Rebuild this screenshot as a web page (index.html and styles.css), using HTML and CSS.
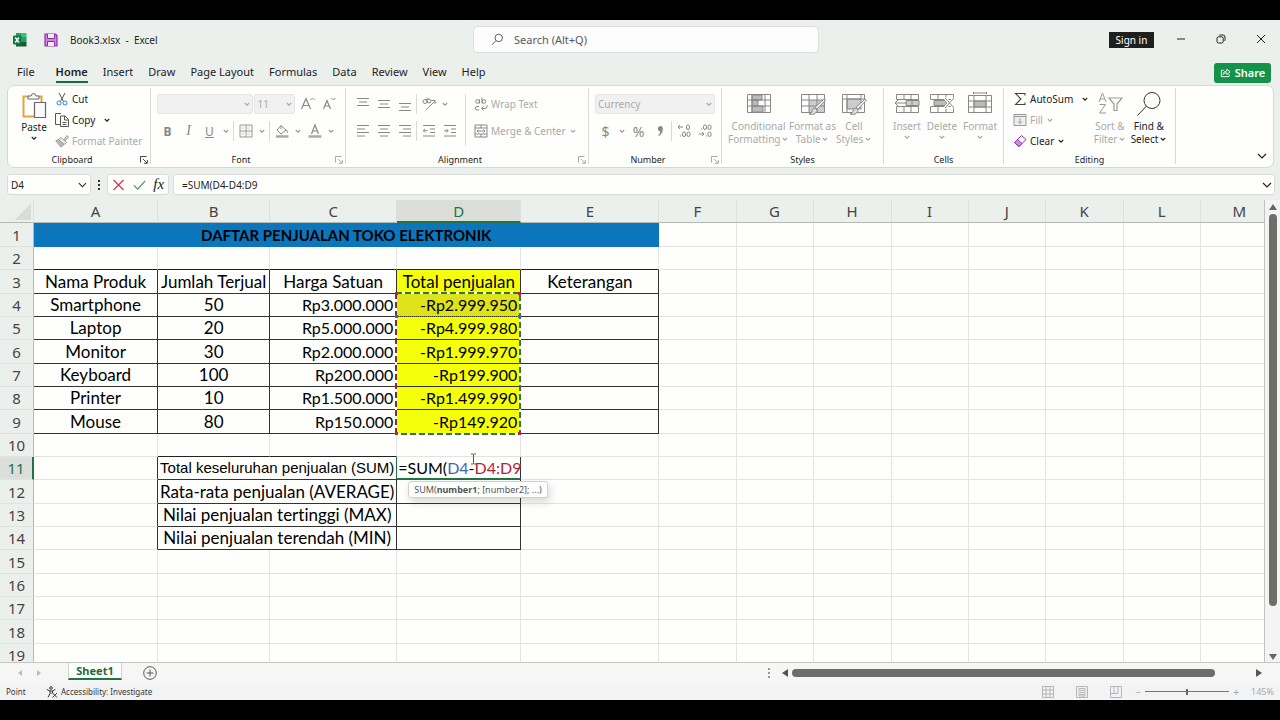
FILE: index.html
```html
<!doctype html>
<html lang="en">
<head>
    <meta charset="UTF-8">
    <meta name="viewport" content="width=device-width, initial-scale=1.0">
    <title>Book3.xlsx - Excel</title>
    <link rel="stylesheet" href="styles.css">
</head>
<body>
<svg class="defs" aria-hidden="true">
    <symbol id="caret" viewBox="0 0 8 8"><path d="M1.8 3 4 5.2 6.2 3" fill="none" stroke="currentColor" stroke-width="1.1"/></symbol>
    <symbol id="launcher" viewBox="0 0 8 8"><path d="M.5 6.500V.5h6M3 3l4 4M7.300 4v3.300H4" fill="none" stroke="currentColor"/></symbol>
    <symbol id="down" viewBox="0 0 10 10"><path d="M1 3l4 4 4-4" fill="none" stroke="currentColor" stroke-width="1.200"/></symbol>
</svg>
<div class="app">
    <header class="titlebar">
        <div class="doc">
            <svg class="logo" viewBox="0 0 16 16"><path fill="#21a366" d="M4 1h6v4H4z"/><path fill="#33c481" d="M9 1h5.500v4H9z"/><path fill="#107c41" d="M4 5h6v5H4z"/><path fill="#21a366" d="M9 5h5.500v5H9z"/><path fill="#185c37" d="M4 10h10.500v4.500H4z"/><rect x="1" y="3.500" width="8.500" height="9" rx="1" fill="#107c41"/><path d="M3.300 5.500 7 10.500M7 5.500 3.300 10.500" stroke="#fff" stroke-width="1.400"/></svg>
            <button class="save" aria-label="Save"><svg viewBox="0 0 14 14"><path d="M1 1h10.500L13 2.500V13H1z" fill="#c987dc" stroke="#8b2fa8" stroke-width="1.200"/><path d="M3.500 1v4.500h7V1" fill="#f5eaf8" stroke="#8b2fa8"/><path d="M3.500 13V8.500h7V13" fill="#f5eaf8" stroke="#8b2fa8"/></svg></button>
            <span class="doc-name">Book3.xlsx&nbsp; -&nbsp; Excel</span>
        </div>
        <label class="search">
            <svg viewBox="0 0 14 14"><circle cx="8.300" cy="5.300" r="4" fill="none" stroke="#555"/><path d="M5.300 8.300 1 12.800" stroke="#555"/></svg>
            <input type="text" placeholder="Search (Alt+Q)">
        </label>
        <div class="window">
            <button class="signin">Sign in</button>
            <button class="win" aria-label="Minimize"><svg viewBox="0 0 10 10"><path d="M1 5h8" stroke="#222"/></svg></button>
            <button class="win" aria-label="Restore"><svg viewBox="0 0 10 10" fill="none" stroke="#222"><rect x="1" y="2.800" width="6.200" height="6.200" rx="1.500"/><path d="M3 1.500Q3.500 1 4.500 1H7a2 2 0 0 1 2 2v2.500q0 1-.6 1.500"/></svg></button>
            <button class="win" aria-label="Close"><svg viewBox="0 0 10 10"><path d="M1 1l8 8M9 1 1 9" stroke="#222"/></svg></button>
        </div>
    </header>

    <nav class="tabs">
        <a href="#" class="tab">File</a>
        <a href="#" class="tab active">Home</a>
        <a href="#" class="tab">Insert</a>
        <a href="#" class="tab">Draw</a>
        <a href="#" class="tab">Page Layout</a>
        <a href="#" class="tab">Formulas</a>
        <a href="#" class="tab">Data</a>
        <a href="#" class="tab">Review</a>
        <a href="#" class="tab">View</a>
        <a href="#" class="tab">Help</a>
        <button class="share"><svg viewBox="0 0 12 12" fill="none" stroke="#fff"><path d="M4 3.500H1.500v7h8.500V8"/><path d="M3.500 8q.3-3.500 4-3.700V2.300l3.500 3-3.500 3V6.300Q5 6.300 3.500 8z"/></svg>Share</button>
    </nav>

    <section class="ribbon">
        <div class="group clipboard">
            <div class="tools">
                <button class="big paste">
                    <svg viewBox="0 0 26 28"><path d="M8 4.500H2.500v20H13M17 4.500h3.500V10" fill="none" stroke="#e8a33d" stroke-width="2"/><path d="M7 7V4h3q.5-2.500 2.500-2.500T15 4h3v3z" fill="#fff" stroke="#666"/><path d="M13.500 10.500h11v15h-11z" fill="#fafafa" stroke="#666" stroke-width="1.200"/></svg>
                    <span>Paste</span>
                    <svg class="caret"><use href="#caret"/></svg>
                </button>
                <div class="stack">
                    <button class="item"><svg class="ico" viewBox="0 0 14 14" fill="none"><path d="M4 1l4.500 8.500M10 1 5.500 9.500" stroke="#555"/><circle cx="4" cy="11" r="2" stroke="#2b88d8"/><circle cx="10" cy="11" r="2" stroke="#2b88d8"/></svg>Cut</button>
                    <button class="item"><svg class="ico" viewBox="0 0 14 14" fill="none" stroke="#555"><path d="M5 11.500H.5v-11H6"/><path d="M5.500 3h4.500l3.500 3.500v7h-8zM9.500 3v4h4M7.500 9.500h4M7.500 11.500h4"/></svg>Copy<svg class="caret far"><use href="#caret"/></svg></button>
                    <button class="item off"><svg class="ico" viewBox="0 0 14 14"><path d="M9 5.500 12 1.500l1.500 1.500L10.500 6.500z" fill="#ddd" stroke="#999"/><path d="M6 3.500l5.500 5L9 10.500 3.500 5.500z" fill="#eee" stroke="#999"/><path d="M3.500 5.500.8 6.800 6 13l3-2.500z" fill="#bbb" stroke="#999"/></svg>Format Painter</button>
                </div>
            </div>
            <div class="caption has-launcher">Clipboard<svg class="launcher dark"><use href="#launcher"/></svg></div>
        </div>

        <div class="group font">
            <div class="tools rows">
                <div class="row">
                    <button class="combo face" aria-label="Font"><span></span><svg class="caret"><use href="#caret"/></svg></button>
                    <button class="combo size" aria-label="Font size"><span>11</span><svg class="caret"><use href="#caret"/></svg></button>
                    <button class="tool grow" aria-label="Increase font size"><svg viewBox="0 0 16 16" fill="none" stroke="#888"><path d="M1.500 13 6 2.500 10.500 13M3 9.500h6" stroke-width="1.200"/><path d="M10.500 4l2-2 2 2"/></svg></button>
                    <button class="tool" aria-label="Decrease font size"><svg viewBox="0 0 16 16" fill="none" stroke="#888"><path d="M2.500 13 6 4.500 9.500 13M4 10h4.500" stroke-width="1.200"/><path d="M10.500 2l2 2 2-2"/></svg></button>
                </div>
                <div class="row">
                    <button class="tool bold">B</button>
                    <button class="tool italic">I</button>
                    <button class="tool under">U</button>
                    <svg class="caret drop"><use href="#caret"/></svg>
                    <i class="sep"></i>
                    <button class="tool" aria-label="Borders"><svg viewBox="0 0 16 16" fill="none" stroke="#999"><path d="M2 2h12v12H2zM8 2v12M2 8h12"/><path d="M5 3v10M11 3v10M3 5h10M3 11h10" stroke="#ccc" stroke-dasharray="1 1"/></svg></button>
                    <svg class="caret drop"><use href="#caret"/></svg>
                    <i class="sep"></i>
                    <button class="tool" aria-label="Fill color"><svg viewBox="0 0 16 16" fill="none" stroke="#888"><path d="M7 2.500l5 4.500-5 4L3 7zM7 2.500V6M12 6.500q2 2 1.200 3.500"/><path d="M2 13.500h12.500" stroke="#aaa" stroke-width="2.500"/></svg></button>
                    <svg class="caret drop"><use href="#caret"/></svg>
                    <button class="tool" aria-label="Font color"><svg viewBox="0 0 16 16" fill="none" stroke="#888"><path d="M4.500 11 8 2l3.500 9M5.500 8h5" stroke-width="1.200"/><path d="M1.500 13.500h13" stroke="#aaa" stroke-width="2.500"/></svg></button>
                    <svg class="caret drop"><use href="#caret"/></svg>
                </div>
            </div>
            <div class="caption has-launcher">Font<svg class="launcher"><use href="#launcher"/></svg></div>
        </div>

        <div class="group alignment">
            <div class="tools">
                <div class="rows aligns">
                    <div class="row">
                        <button class="tool" aria-label="Top align"><svg viewBox="0 0 16 16" stroke="#888"><path d="M2 2.500h12M4 6h8M2 9.500h12"/></svg></button>
                        <button class="tool" aria-label="Middle align"><svg viewBox="0 0 16 16" stroke="#888"><path d="M2 4.500h12M4 8h8M2 11.500h12"/></svg></button>
                        <button class="tool" aria-label="Bottom align"><svg viewBox="0 0 16 16" stroke="#888"><path d="M2 7.500h12M4 11h8M2 14.500h12"/></svg></button>
                        <i class="sep"></i>
                        <button class="tool" aria-label="Orientation"><svg viewBox="0 0 16 16" fill="none" stroke="#888"><circle cx="4" cy="5.500" r="2"/><path d="M5 3l2 3.500"/><circle cx="8" cy="5" r="2"/><path d="M6 1.500l1.500 2M5 14 14 5M10.500 4.500H14V8"/></svg></button>
                        <svg class="caret drop"><use href="#caret"/></svg>
                    </div>
                    <div class="row">
                        <button class="tool" aria-label="Align left"><svg viewBox="0 0 16 16" stroke="#888"><path d="M2 2.500h12M2 6h8M2 9.500h12M2 13h8"/></svg></button>
                        <button class="tool" aria-label="Center"><svg viewBox="0 0 16 16" stroke="#888"><path d="M2 2.500h12M4 6h8M2 9.500h12M4 13h8"/></svg></button>
                        <button class="tool" aria-label="Align right"><svg viewBox="0 0 16 16" stroke="#888"><path d="M2 2.500h12M6 6h8M2 9.500h12M6 13h8"/></svg></button>
                        <i class="sep"></i>
                        <button class="tool" aria-label="Decrease indent"><svg viewBox="0 0 16 16" fill="none" stroke="#888"><path d="M2 2.500h12M9 6h5M9 9.500h5M2 13h12M2.500 7.800h4M4 6 2.300 7.800 4 9.500"/></svg></button>
                        <button class="tool" aria-label="Increase indent"><svg viewBox="0 0 16 16" fill="none" stroke="#888"><path d="M2 2.500h12M9 6h5M9 9.500h5M2 13h12M2 7.800h4M4.500 6 6.200 7.800 4.500 9.500"/></svg></button>
                    </div>
                </div>
                <i class="sep tall"></i>
                <div class="rows">
                    <button class="item off row"><svg class="ico" viewBox="0 0 14 14" fill="none" stroke="#888"><circle cx="3.500" cy="4.500" r="1.800"/><path d="M5.500 2.500v4M8 .5v6"/><circle cx="10" cy="4.500" r="1.800"/><path d="M5 9.500H3a1.600 1.600 0 0 0 0 3.500h2M13 8v1.500q0 2-2 2H8M9.500 9.500l-2 2 2 2"/></svg>Wrap Text</button>
                    <button class="item off row"><svg class="ico" viewBox="0 0 14 14" fill="none" stroke="#888"><path d="M1 1h12v12H1zM1 4h12M1 10h12M7 1v3M7 10v3"/><path d="M3 7h8M4.500 5.500 3 7l1.500 1.500M9.500 5.500 11 7 9.500 8.500"/></svg>Merge &amp; Center<svg class="caret"><use href="#caret"/></svg></button>
                </div>
            </div>
            <div class="caption has-launcher">Alignment<svg class="launcher"><use href="#launcher"/></svg></div>
        </div>

        <div class="group number">
            <div class="tools rows">
                <div class="row">
                    <button class="combo format" aria-label="Number format"><span>Currency</span><svg class="caret"><use href="#caret"/></svg></button>
                </div>
                <div class="row">
                    <button class="tool sign">$</button>
                    <svg class="caret drop"><use href="#caret"/></svg>
                    <button class="tool sign">%</button>
                    <button class="tool" aria-label="Comma style"><svg viewBox="0 0 16 16"><path d="M8 3a2.800 2.800 0 0 1 2.800 3q0 4.500-4 7l-.6-.8Q8.200 10.500 8.300 8.500A2.800 2.800 0 0 1 8 3z" fill="#888"/></svg></button>
                    <i class="sep"></i>
                    <button class="tool" aria-label="Increase decimal"><svg viewBox="0 0 16 16" fill="none" stroke="#888"><path d="M2 4h5M4 2 2 4l2 2M4 13h1"/><rect x="10.500" y="2" width="3" height="4.500" rx="1.500"/><rect x="6.500" y="9" width="3" height="4.500" rx="1.500"/><rect x="11" y="9" width="3" height="4.500" rx="1.500"/></svg></button>
                    <button class="tool" aria-label="Decrease decimal"><svg viewBox="0 0 16 16" fill="none" stroke="#888"><path d="M2 11h5M5 9l2 2-2 2M4 6h1M9 13h1"/><rect x="6.500" y="2" width="3" height="4.500" rx="1.500"/><rect x="11" y="2" width="3" height="4.500" rx="1.500"/><rect x="11" y="9" width="3" height="4.500" rx="1.500"/></svg></button>
                </div>
            </div>
            <div class="caption has-launcher">Number<svg class="launcher"><use href="#launcher"/></svg></div>
        </div>

        <div class="group styles">
            <div class="tools">
                <button class="big off"><svg viewBox="0 0 26 24" fill="none" stroke="#888"><path d="M1.500 2.500h23v18h-23z"/><path d="M6 3h10v5H6zM6 8h6v6H6zM6 14h11v6H6z" fill="#bbb"/><path d="M2 8h22M2 14h22M6 3v17M19 3v17"/></svg><span>Conditional<br>Formatting <svg class="caret"><use href="#caret"/></svg></span></button>
                <button class="big off"><svg viewBox="0 0 26 24" fill="none" stroke="#888"><path d="M9 8h15v12H9z" fill="#ccc" stroke="none"/><path d="M1.500 2.500h23v18h-23zM2 8h22M2 14h22M9 3v17M17 3v17"/><path d="M25.500 8 17 17l-2-1.500L23.500 7.500z" fill="#fff"/><path d="M15 16q-2.500 0-3 3-.5 2.500-3 3 5.500 1.500 8-2.500.5-2-2-3.500z" fill="#ddd"/></svg><span>Format as<br>Table <svg class="caret"><use href="#caret"/></svg></span></button>
                <button class="big off"><svg viewBox="0 0 26 24" fill="none" stroke="#888"><path d="M6 7h14v10H6z" fill="#ccc"/><path d="M1.500 2.500h22v18h-22zM2 7h22M6 3v17M20 3v4"/><path d="M25.500 8 17 17l-2-1.500L23.500 7.500z" fill="#fff"/><path d="M15 16q-2.500 0-3 3-.5 2.500-3 3 5.500 1.500 8-2.500.5-2-2-3.500z" fill="#ddd"/></svg><span>Cell<br>Styles <svg class="caret"><use href="#caret"/></svg></span></button>
            </div>
            <div class="caption">Styles</div>
        </div>

        <div class="group cells">
            <div class="tools">
                <button class="big off"><svg viewBox="0 0 26 24" fill="none" stroke="#888"><path d="M2.500 2.500h22v5h-22zM2.500 14.500h22v6h-22zM10 3v4M17 3v4M10 15v5M17 15v5"/><path d="M12 8.500h13v5H12z" fill="#ccc"/><path d="M18 9v4M1 11h12M5 7 1 11l4 4"/></svg><span>Insert</span><svg class="caret"><use href="#caret"/></svg></button>
                <button class="big off"><svg viewBox="0 0 26 24" fill="none" stroke="#888"><path d="M1.500 2.500h23v5h-23zM1.500 14.500h23v6h-23zM9 3v4M17 3v4M9 15v5M17 15v5"/><path d="M5 8.500h11l2 2.500-2 2.500H5z" fill="#bbb"/><path d="M16 6l9 10M25 6l-9 10" stroke="#fff" stroke-width="3"/><path d="M16 6l9 10M25 6l-9 10"/></svg><span>Delete</span><svg class="caret"><use href="#caret"/></svg></button>
                <button class="big off"><svg viewBox="0 0 26 24" fill="none" stroke="#888"><path d="M6.500 0v2M19.500 0v2M6.500 1h13"/><path d="M7 9h12v6H7z" fill="#bbb"/><path d="M1.500 3.500h23v17h-23zM2 9h22M2 15h22M7 4v16M19 4v16"/></svg><span>Format</span><svg class="caret"><use href="#caret"/></svg></button>
            </div>
            <div class="caption">Cells</div>
        </div>

        <div class="group editing">
            <div class="tools">
                <div class="stack">
                    <button class="item"><svg class="ico" viewBox="0 0 14 14"><path d="M12 3.500V1.500H2.500L8 7l-5.500 5.500H12v-2" fill="none" stroke="#444" stroke-width="1.100"/></svg>AutoSum<svg class="caret far"><use href="#caret"/></svg></button>
                    <button class="item off"><svg class="ico" viewBox="0 0 14 14" fill="none" stroke="#999"><path d="M1 1.500h12v11H1z" fill="#eee"/><path d="M1 3.500h12M7 5.500v5M5 8.500l2 2 2-2"/></svg>Fill <svg class="caret"><use href="#caret"/></svg></button>
                    <button class="item"><svg class="ico" viewBox="0 0 14 14"><path d="M8.500 1.500 13 5.500 6 12.500 1.500 8.500z" fill="#fff" stroke="#8b2fa8"/><path d="M4.500 5.500 9 9.500l-3 3-4.500-4z" fill="#d28be0" stroke="#8b2fa8"/></svg>Clear<svg class="caret"><use href="#caret"/></svg></button>
                </div>
                <button class="big off"><svg viewBox="0 0 26 24" fill="none" stroke="#999"><path d="M2 10 5.500 1 9 10M3.200 7h4.600M2.500 12.500h6l-6 8.500h6.500"/><path d="M12 6h13l-5 6v6.500h-3V12z" stroke-width="1.200"/></svg><span>Sort &amp;<br>Filter <svg class="caret"><use href="#caret"/></svg></span></button>
                <button class="big"><svg viewBox="0 0 26 24" fill="none" stroke="#333"><circle cx="16" cy="8.500" r="8"/><path d="M10.500 14 1.500 23.500"/></svg><span>Find &amp;<br>Select <svg class="caret"><use href="#caret"/></svg></span></button>
            </div>
            <div class="caption">Editing</div>
        </div>
        <button class="collapse" aria-label="Collapse ribbon"><svg viewBox="0 0 10 10"><use href="#down"/></svg></button>
    </section>

    <section class="formula-row">
        <div class="box name-box">
            <input type="text" value="D4" aria-label="Name box">
            <svg viewBox="0 0 10 10"><use href="#down"/></svg>
        </div>
        <svg class="dots" viewBox="0 0 4 12" fill="#333"><path d="M1 1h2v2H1zM1 5h2v2H1zM1 9h2v2H1z"/></svg>
        <div class="box fx">
            <button aria-label="Cancel"><svg viewBox="0 0 12 12"><path d="M1 1l10 10M11 1 1 11" stroke="#d13455" stroke-width="1.200"/></svg></button>
            <button aria-label="Enter"><svg viewBox="0 0 14 12"><path d="M1 6.500 5 10.500 13 1.500" fill="none" stroke="#3c9a5f" stroke-width="1.200"/></svg></button>
            <button class="fx-btn">fx</button>
        </div>
        <div class="box formula">
            <input type="text" value="=SUM(D4-D4:D9" aria-label="Formula bar">
            <svg viewBox="0 0 10 10"><use href="#down"/></svg>
        </div>
    </section>

    <main class="sheet">
        <div class="grid">
            <table>
                <colgroup>
                    <col class="c-head"><col class="c-a"><col class="c-b"><col class="c-c"><col class="c-d"><col class="c-e">
                    <col class="c-f"><col class="c-f"><col class="c-g"><col class="c-f"><col class="c-f"><col class="c-g"><col class="c-f"><col class="c-g">
                </colgroup>
                <thead>
                    <tr><th class="corner"></th><th>A</th><th>B</th><th>C</th><th class="sel">D</th><th>E</th><th>F</th><th>G</th><th>H</th><th>I</th><th>J</th><th>K</th><th>L</th><th>M</th></tr>
                </thead>
                <tbody id="rows">
                    <tr><th>1</th><td colspan="5" class="title">DAFTAR PENJUALAN TOKO ELEKTRONIK</td></tr>
                    <tr><th>2</th><td class="edge"></td><td class="edge"></td><td class="edge"></td><td class="edge"></td><td class="edge"></td></tr>
                    <tr class="data"><th>3</th><td>Nama Produk</td><td>Jumlah Terjual</td><td>Harga Satuan</td><td class="hot">Total penjualan</td><td>Keterangan</td></tr>
                    <tr class="data"><th>4</th><td>Smartphone</td><td>50</td><td class="num">Rp3.000.000</td><td class="num hot picked">-Rp2.999.950
                        <svg class="ants" viewBox="0 0 126 143" fill="none">
                            <path d="M1 1h124v141H1z" stroke="#fff" stroke-width="2"/>
                            <path d="M1 1v141" stroke="#7d2e3c" stroke-width="2" stroke-dasharray="6 3"/>
                            <path d="M1 1h124v141H1" stroke="#2c7a2c" stroke-width="2" stroke-dasharray="6 3"/>
                            <path d="M2 24.500h122" stroke="#4a82c4" stroke-dasharray="1 1"/>
                            <path d="M0 0h3v3H0zM123 0h3v3h-3zM0 140h3v3H0zM123 140h3v3h-3z" fill="#b0244f"/>
                            <path d="M0 23h3v3H0zM123 23h3v3h-3z" fill="#2f6fba"/>
                        </svg></td><td></td></tr>
                    <tr class="data"><th>5</th><td>Laptop</td><td>20</td><td class="num">Rp5.000.000</td><td class="num hot">-Rp4.999.980</td><td></td></tr>
                    <tr class="data"><th>6</th><td>Monitor</td><td>30</td><td class="num">Rp2.000.000</td><td class="num hot">-Rp1.999.970</td><td></td></tr>
                    <tr class="data"><th>7</th><td>Keyboard</td><td>100</td><td class="num">Rp200.000</td><td class="num hot">-Rp199.900</td><td></td></tr>
                    <tr class="data"><th>8</th><td>Printer</td><td>10</td><td class="num">Rp1.500.000</td><td class="num hot">-Rp1.499.990</td><td></td></tr>
                    <tr class="data"><th>9</th><td>Mouse</td><td>80</td><td class="num">Rp150.000</td><td class="num hot">-Rp149.920</td><td></td></tr>
                    <tr><th>10</th><td></td><td class="edge"></td><td class="edge"></td><td></td></tr>
                    <tr class="sum"><th class="sel">11</th><td class="pre"></td><td colspan="2" class="total">Total keseluruhan penjualan (SUM)</td><td class="edit">=SUM(<span class="ref1">D4</span>-<span class="ref2">D4:D9</span>
                        <span class="tip">SUM(<b>number1</b>; [number2]; ...)</span>
                        <svg class="cursor" viewBox="0 0 7 12"><path d="M1 1h2l.5.500.5-.5h2M3.500 1.500v9M1 11h2l.5-.5.5.500h2" fill="none" stroke="#555"/></svg></td></tr>
                    <tr class="sum"><th>12</th><td class="pre"></td><td colspan="2">Rata-rata penjualan (AVERAGE)</td><td></td></tr>
                    <tr class="sum"><th>13</th><td class="pre"></td><td colspan="2">Nilai penjualan tertinggi (MAX)</td><td></td></tr>
                    <tr class="sum"><th>14</th><td class="pre"></td><td colspan="2">Nilai penjualan terendah (MIN)</td><td></td></tr>
                    <tr><th>15</th></tr>
                    <tr><th>16</th></tr>
                    <tr><th>17</th></tr>
                    <tr><th>18</th></tr>
                    <tr><th>19</th></tr>
                </tbody>
            </table>
        </div>
        <div class="vscroll">
            <svg viewBox="0 0 8 6"><path d="M4 0l4 6H0z"/></svg>
            <div class="track"><div class="thumb"></div></div>
            <svg viewBox="0 0 8 6"><path d="M4 6 0 0h8z"/></svg>
        </div>
    </main>

    <div class="sheet-tabs">
        <div class="arrows">
            <svg viewBox="0 0 6 8"><path d="M5 1v6L1 4z"/></svg>
            <svg viewBox="0 0 6 8"><path d="M1 1v6l4-3z"/></svg>
        </div>
        <button class="sheet-tab">Sheet1</button>
        <button class="add" aria-label="New sheet"><svg viewBox="0 0 14 14" fill="none" stroke="#555"><circle cx="7" cy="7" r="6.300"/><path d="M7 3.500v7M3.500 7h7"/></svg></button>
        <div class="hscroll">
            <svg class="grip" viewBox="0 0 2 10"><path d="M0 0h2v2H0zM0 4h2v2H0zM0 8h2v2H0z"/></svg>
            <svg viewBox="0 0 6 8"><path d="M6 0v8L0 4z"/></svg>
            <div class="track"><div class="thumb"></div></div>
            <svg viewBox="0 0 6 8"><path d="M0 0v8l6-4z"/></svg>
        </div>
    </div>

    <footer class="status">
        <span class="mode">Point</span>
        <svg class="access" viewBox="0 0 12 12" fill="none" stroke="#333"><circle cx="5" cy="2" r="1.300"/><path d="M.8 3.500 4 5v2.500L2 11.300M9.300 3.500 6.500 5v2M4 5h2.500M4.500 8l1-1"/><path d="M6.500 7l4.500 4.500M11 7l-4.500 4.500"/></svg>
        <span>Accessibility: Investigate</span>
        <div class="views">
            <button aria-label="Normal"><svg viewBox="0 0 12 12"><path d="M.5.500h11v11H.5zM4 .5v11M8 .5v11M.5 4h11M.5 8h11"/></svg></button>
            <button aria-label="Page layout"><svg viewBox="0 0 12 12"><path d="M.5.500h11v11H.5zM3 2.500h6v7.500H3zM4 4.500h4M4 6.500h4M4 8.500h4"/></svg></button>
            <button aria-label="Page break preview"><svg viewBox="0 0 12 12"><path d="M.5.500h11v11H.5zM4 .5v7M8 .5v7M.5 7.500H8"/></svg></button>
        </div>
        <div class="zoom">
            <span>−</span>
            <input type="range" min="0" max="100" value="50" aria-label="Zoom">
            <span>+</span>
        </div>
        <span class="percent">145%</span>
    </footer>
</div>
<script>
    // fill every row with blank cells up to column M
    var rows = document.querySelectorAll('#rows tr');
    rows.forEach(function(row) {
        var used = 0;
        row.querySelectorAll('td').forEach(function(td) {
            used += td.colSpan;
        });
        while (used < 13) {
            row.appendChild(document.createElement('td')).className = 'blank';
            used++;
        }
    });
</script>
</body>
</html>
```
FILE: styles.css
```css
* {
    box-sizing: border-box;
}
body {
    margin: 0;
    padding: 20px 0;
    height: 100vh;
    background: #000;
    color: #222;
    font-family: "Noto Sans", sans-serif;
    font-size: 10px;
}
button, input {
    font: inherit;
    color: inherit;
    background: none;
    border: 0;
    padding: 0;
    outline: 0;
}
.defs {
    display: none;
}
.app {
    height: 100%;
    display: flex;
    flex-direction: column;
    background: #ecf0ed;
    overflow: hidden;
}

/* title bar */
.titlebar {
    display: flex;
    align-items: center;
    height: 40px;
    padding-left: 12px;
}
.doc, .window {
    flex: 1;
    display: flex;
    align-items: center;
}
.logo {
    width: 16px;
    height: 16px;
}
.save {
    margin: 0 12px 0 16px;
    height: 14px;
}
.save svg {
    width: 14px;
    height: 14px;
    display: block;
}
.search {
    display: flex;
    align-items: center;
    gap: 10px;
    width: 346px;
    height: 27px;
    margin-bottom: 2px;
    padding: 0 17px;
    background: #fbfcfb;
    border: 1px solid #dcdfdc;
    border-radius: 4px;
    font-size: 11px;
}
.search svg {
    width: 13px;
    height: 13px;
}
.search input {
    flex: 1;
}
.search input::placeholder {
    color: #5a5a5a;
}
.window {
    justify-content: flex-end;
}
.signin {
    width: 45px;
    height: 16px;
    margin-right: 2px;
    background: #1f1f1f;
    color: #fff;
}
.win {
    width: 30px;
    height: 20px;
    margin-left: 10px;
}
.win:last-child {
    margin-right: 4px;
}
.win svg {
    width: 10px;
    height: 10px;
}

/* ribbon tabs */
.tabs {
    display: flex;
    align-items: center;
    gap: 15px;
    height: 25px;
    padding: 0 9px 0 17px;
    font-size: 11px;
}
.tab {
    color: #222;
    text-decoration: none;
    line-height: 18px;
    border-bottom: 2px solid transparent;
}
.tab.active {
    margin-left: 6px;
    font-weight: 600;
    border-color: #0f7040;
}
.share {
    display: flex;
    align-items: center;
    justify-content: center;
    gap: 4px;
    width: 57px;
    height: 20px;
    margin-left: auto;
    border-radius: 3px;
    background: #15924a;
    color: #fff;
    font-weight: 600;
}
.share svg {
    width: 11px;
    height: 11px;
}

/* ribbon */
.ribbon {
    display: flex;
    height: 83px;
    margin: 0 6px 0 7px;
    background: #fefffc;
    border: 1px solid #d6d9d6;
    border-radius: 7px;
}
.group {
    display: flex;
    flex-direction: column;
    margin: 2px 0 3px;
    border-right: 1px solid #d9d9d9;
}
.clipboard { width: 143px; }
.font { width: 195px; }
.alignment { width: 243px; }
.number { width: 133px; }
.styles { width: 162px; }
.cells { width: 120px; }
.editing { width: 172px; }
.tools {
    display: flex;
    flex: 1;
    min-height: 0;
    padding: 0 6px;
}
.caption {
    position: relative;
    line-height: 8px;
    font-size: 9px;
    text-align: center;
}
.has-launcher {
    padding-right: 14px;
}
.launcher {
    position: absolute;
    right: 2px;
    bottom: 0;
    width: 8px;
    height: 8px;
    color: #aaa;
}
.launcher.dark {
    color: #444;
}
.caret {
    width: 8px;
    height: 8px;
    flex: none;
}
.caret.far {
    margin-left: 5px;
}
.caret.drop {
    width: 12px;
    color: #999;
}
.rows {
    display: flex;
    flex-direction: column;
    padding-top: 6px;
    gap: 7px;
}
.row {
    display: flex;
    align-items: center;
    height: 20px;
}
.stack {
    display: flex;
    flex-direction: column;
}
.item {
    display: flex;
    align-items: center;
    gap: 3px;
    height: 21px;
    text-align: left;
    white-space: nowrap;
}
.item.row {
    height: 20px;
}
.ico {
    width: 14px;
    height: 14px;
    flex: none;
}
.off {
    color: #a9a9a9;
}
.tool {
    width: 21px;
    height: 20px;
    color: #888;
    font-size: 12px;
    text-align: center;
}
.tool svg {
    width: 16px;
    height: 16px;
    display: block;
    margin: 0 auto;
}
.bold {
    font-weight: 700;
}
.italic {
    font-family: "Liberation Serif", serif;
    font-style: italic;
    font-size: 14px;
}
.under {
    text-decoration: underline;
}
.sign {
    font-size: 14px;
}
.sep {
    width: 1px;
    height: 20px;
    margin: 0 1px;
    background: #d9d9d9;
}
.sep.tall {
    height: 52px;
    margin: 6px 8px 0 0;
}
.combo {
    display: flex;
    align-items: center;
    justify-content: space-between;
    height: 20px;
    padding: 0 1px 0 2px;
    background: #f0f1f0;
    border: 1px solid #e3e4e3;
    border-radius: 3px;
    color: #aaa;
}
.face { width: 97px; }
.size { width: 41px; margin-left: 1px; }
.format { width: 121px; }
.grow {
    margin-left: 2px;
}
.font .tools, .number .tools {
    padding: 6px 6px 0;
}
.aligns {
    width: 113px;
}
.big {
    display: flex;
    flex-direction: column;
    align-items: center;
    padding-top: 4px;
    line-height: 13px;
    white-space: nowrap;
}
.big > svg:first-child {
    width: 26px;
    height: 24px;
    flex: none;
}
.big > span {
    margin-top: 4px;
}
.big span .caret {
    display: inline-block;
    margin-left: -2px;
}
.clipboard .tools {
    padding-left: 13px;
    gap: 8px;
}
.clipboard .big > svg:first-child {
    height: 28px;
}
.clipboard .big > span {
    margin-top: 1px;
}
.cells .tools {
    padding: 0 6px 0 9px;
    justify-content: space-between;
}
.editing .tools {
    padding: 0 8px 0 9px;
    justify-content: space-between;
}
.collapse {
    align-self: flex-end;
    height: 20px;
    margin: 0 6px 0 auto;
}
.collapse svg {
    width: 10px;
    height: 10px;
}

/* formula bar */
.formula-row {
    display: flex;
    align-items: center;
    gap: 4px;
    padding: 6px 0 5px;
    margin: 0 5px 0 7px;
}
.box {
    display: flex;
    align-items: center;
    height: 21px;
    background: #fefffc;
    border: 1px solid #d9dcd9;
    border-radius: 3px;
}
.box svg {
    width: 10px;
    height: 10px;
}
.name-box {
    width: 84px;
    padding: 0 3px;
}
.name-box input {
    width: 100%;
    min-width: 0;
}
.formula-row .dots {
    width: 4px;
    height: 12px;
    margin: 0 2px;
}
.fx {
    width: 62px;
    justify-content: space-around;
}
.fx button {
    display: flex;
}
.fx svg {
    width: 13px;
    height: 12px;
}
.fx-btn {
    font-family: "Liberation Serif", serif;
    font-style: italic;
    font-size: 15px;
}
.formula {
    flex: 1;
    padding: 0 2px 0 8px;
}
.formula input {
    flex: 1;
}

/* grid */
.sheet {
    flex: 1;
    display: flex;
    min-height: 0;
    border-bottom: 1px solid #c4c7c4;
}
.grid {
    flex: 1;
    overflow: hidden;
    background: #fefffc;
    border-right: 1px solid #c0c3c0;
}
table {
    width: 1279px;
    table-layout: fixed;
    border-collapse: separate;
    border-spacing: 0;
}
.c-head { width: 34px; }
.c-a { width: 124px; }
.c-b { width: 112px; }
.c-c { width: 127px; }
.c-d { width: 124px; }
.c-e { width: 138px; }
.c-f { width: 77px; }
.c-g { width: 78px; }
th {
    padding: 0;
    background: #ecf0ed;
    color: #444;
    font-size: 15px;
    font-weight: 400;
    line-height: 20px;
}
thead th {
    height: 23px;
    border-right: 1px solid #dde1de;
    border-bottom: 1px solid #b5b9b6;
}
.corner {
    background: linear-gradient(135deg, transparent 50%, #d9dcd9 50%) 14px 4px / 17px 16px no-repeat #ecf0ed;
}
tbody th {
    border-right: 1px solid #b5b9b6;
    border-bottom: 1px solid #e0e4e1;
}
thead .sel {
    background: #dcdedc;
    color: #217346;
    border-bottom: 2px solid #217346;
}
tbody .sel {
    background: #dcdedc;
    color: #217346;
    border-right: 2px solid #217346;
}
tbody tr {
    height: 23px;
}
tbody tr:first-child, tbody tr:nth-child(3n) {
    height: 24px;
}
td {
    padding: 0;
    font-family: Lato, sans-serif;
    font-size: 17px;
    font-variant-ligatures: none;
    line-height: 20px;
    color: #000;
    text-align: center;
    white-space: nowrap;
    border-right: 1px solid #e2e4e1;
    border-bottom: 1px solid #e2e4e1;
}
.title {
    background: #0b76bc;
    border-color: #0b76bc;
    font-size: 15px;
    font-weight: 700;
}
.edge {
    border-bottom-color: #222;
}
.data td, .sum td {
    border-color: #333;
}
.data .blank, .sum .blank, .sum .pre {
    border-color: #e2e4e1;
}
.sum .pre {
    border-right-color: #333;
}
.data .num {
    padding-right: 3px;
    font-size: 16px;
    text-align: right;
}
.hot {
    background: #f5ff0a;
}
.picked {
    position: relative;
    background: #dfe31a;
}
.ants {
    position: absolute;
    left: -2px;
    top: -2px;
    width: 126px;
    height: 143px;
    z-index: 1;
}
.sum .total {
    border-right-color: #217346;
    font-family: "Liberation Sans", sans-serif;
    font-size: 15px;
}
.sum .edit {
    position: relative;
    padding-left: 1px;
    font-size: 16px;
    text-align: left;
    border-bottom: 2px solid #217346;
    line-height: 19px;
}
.ref1 { color: #3a66b5; }
.ref2 { color: #b01f3c; }
.tip {
    position: absolute;
    left: 11px;
    top: 24px;
    padding: 0 5px;
    border: 1px solid #d0d0d0;
    border-radius: 3px;
    background: #fff;
    box-shadow: 2px 4px 8px rgba(0, 0, 0, 0.15);
    color: #555;
    font-family: "Noto Sans", sans-serif;
    font-size: 9px;
    line-height: 15px;
    z-index: 2;
}
.cursor {
    position: absolute;
    left: 73px;
    top: -4px;
    width: 7px;
    height: 12px;
}

/* scrollbars */
.vscroll {
    display: flex;
    flex-direction: column;
    align-items: center;
    width: 15px;
    padding: 4px 0 2px;
    gap: 4px;
    background: #f3f4f3;
}
.vscroll svg {
    width: 8px;
    height: 6px;
    fill: #666;
}
.vscroll .track {
    flex: 1;
    width: 8px;
}
.vscroll .thumb {
    height: 90%;
    border-radius: 4px;
    background: #6d6e6b;
}
.sheet-tabs {
    display: flex;
    align-items: center;
    height: 20px;
    background: #f6f7f5;
}
.arrows {
    display: flex;
    gap: 13px;
    width: 68px;
    padding-left: 17px;
}
.arrows svg {
    width: 6px;
    height: 8px;
    fill: #bbb;
}
.sheet-tab {
    width: 54px;
    height: 17px;
    align-self: flex-start;
    background: #fefffc;
    border: 1px solid #d0d3d0;
    border-top: 0;
    border-bottom: 2px solid #217346;
    color: #1b6b3d;
    font-size: 11px;
    font-weight: 700;
    line-height: 14px;
}
.add {
    margin-left: 21px;
    height: 14px;
}
.add svg {
    display: block;
    width: 14px;
    height: 14px;
}
.hscroll {
    display: flex;
    align-items: center;
    gap: 4px;
    width: 40%;
    margin-left: auto;
    padding-right: 18px;
}
.hscroll svg {
    width: 6px;
    height: 8px;
    fill: #555;
}
.hscroll .grip {
    width: 2px;
    height: 10px;
    margin-right: 8px;
    fill: #999;
}
.hscroll .track {
    flex: 1;
}
.hscroll .thumb {
    width: 92%;
    height: 8px;
    border-radius: 4px;
    background: #6d6e6b;
}

/* status bar */
.status {
    display: flex;
    align-items: center;
    height: 17px;
    padding: 0 6px;
    background: #f2f3f4;
    color: #333;
    font-size: 8px;
}
.mode {
    width: 40px;
}
.access {
    width: 12px;
    height: 12px;
    margin-right: 3px;
}
.views {
    display: flex;
    gap: 22px;
    margin-left: auto;
}
.views button {
    display: flex;
}
.views svg {
    width: 12px;
    height: 12px;
    fill: none;
    stroke: #b5b5b5;
}
.zoom {
    display: flex;
    align-items: center;
    gap: 4px;
    margin: 0 12px 0 14px;
    color: #aaa;
    font-size: 10px;
}
.zoom input {
    appearance: none;
    width: 84px;
    height: 8px;
    margin: 0;
    background: linear-gradient(#777, #777) center / 100% 1px no-repeat;
}
.zoom input::-webkit-slider-thumb {
    appearance: none;
    width: 2px;
    height: 6px;
    background: #666;
}
.percent {
    color: #aaa;
    font-size: 9px;
}
```
